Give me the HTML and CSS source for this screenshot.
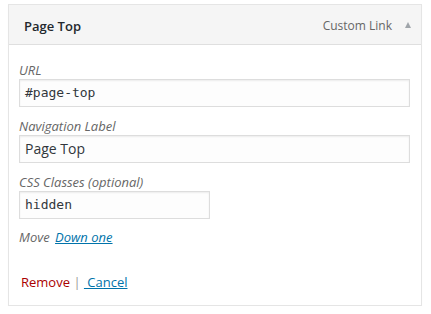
FILE: index.html
```html
<!DOCTYPE html>
<html>
<head>
<meta charset="utf-8">
<link rel="stylesheet" href="styles.css">
</head>
<body>
<div class="menu-item">
  <div class="handle">
    <span class="title">Page Top</span>
    <span class="controls">
      <span class="type">Custom Link</span>
      <span class="arrow"></span>
    </span>
  </div>
  <div class="settings">
    <div class="field">
      <label class="label">URL</label>
      <div class="input wide">#page-top</div>
    </div>
    <div class="field">
      <label class="label">Navigation Label</label>
      <div class="input wide sans">Page Top</div>
    </div>
    <div class="field">
      <label class="label">CSS Classes (optional)</label>
      <div class="input narrow">hidden</div>
    </div>
    <div class="move"><span class="move-label">Move</span> <a class="link down" href="#">Down one</a></div>
    <div class="actions"><a class="remove" href="#">Remove</a> <span class="sep">|</span> <a class="link" href="#">&nbsp;Cancel</a></div>
  </div>
</div>
</body>
</html>
```
FILE: styles.css
```css
html, body {
  margin: 0;
  padding: 0;
  background: #ffffff;
}
body {
  font-family: "Open Sans", "Liberation Sans", sans-serif;
  font-size: 13px;
  line-height: 18px;
  color: #444;
}
.menu-item {
  margin: 4px 9px 0 8px;
  border: 1px solid #e5e5e5;
  box-shadow: 0 1px 1px rgba(0,0,0,0.04);
  background: #fff;
}
.handle {
  display: flex;
  justify-content: space-between;
  align-items: center;
  background: #f5f5f5;
  border-bottom: 1px solid #dfdfdf;
  padding: 12px 10px 9px 15px;
}
.title {
  font-weight: 600;
  color: #23282d;
}
.controls {
  display: flex;
  align-items: center;
  gap: 13px;
}
.type {
  color: #666;
  font-size: 12px;
}
.arrow {
  width: 0;
  height: 0;
  border-left: 3.5px solid transparent;
  border-right: 3.5px solid transparent;
  border-bottom: 6px solid #a0a5aa;
  margin-top: -2px;
}
.settings {
  padding: 16px 10px 14px 10px;
}
.field {
  margin-bottom: 10px;
}
.label {
  display: block;
  font-style: italic;
  color: #666;
}
.input {
  box-sizing: border-box;
  height: 28px;
  border: 1px solid #ddd;
  box-shadow: inset 0 1px 2px rgba(0,0,0,0.07);
  background: #fdfdfd;
  padding: 0 5px;
  line-height: 26px;
  font-family: "DejaVu Sans Mono", "Liberation Mono", monospace;
  font-size: 13px;
  color: #32373c;
}
.input.sans {
  font-family: "Open Sans", "Liberation Sans", sans-serif;
  font-size: 14px;
}
.wide {
  width: 391px;
}
.narrow {
  width: 191px;
}
.move {
  margin-top: -1px;
}
.move-label {
  font-style: italic;
  color: #666;
}
.link {
  color: #0073aa;
  text-decoration: underline;
}
.down {
  font-style: italic;
  margin-left: 2px;
}
.actions {
  margin-top: 27px;
  padding-left: 2px;
}
.remove {
  color: #a00;
  text-decoration: none;
}
.sep {
  color: #999;
}
```
